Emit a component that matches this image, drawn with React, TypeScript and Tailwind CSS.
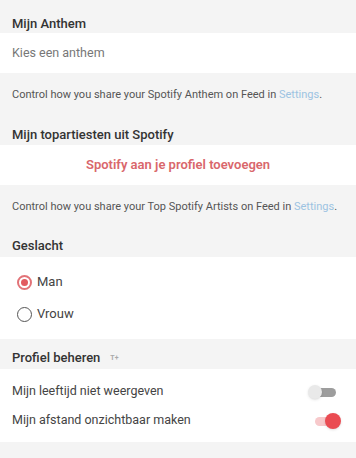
import { useState } from 'react'

function SectionTitle({ children, h = 'h-[32px]', pb = 'pb-[4px]' }: { children: React.ReactNode; h?: string; pb?: string }) {
  return (
    <div className={`flex ${h} items-end gap-[10px] px-3 ${pb} text-[13px] leading-[15px] font-medium text-[#333]`}>
      {children}
    </div>
  )
}

function Note({ children }: { children: React.ReactNode }) {
  return <div className="h-[40px] px-3 pt-[14px] text-[11px] leading-[15px] text-[#555]">{children}</div>
}

function Radio({ checked, label, onClick }: { checked: boolean; label: string; onClick: () => void }) {
  return (
    <button type="button" onClick={onClick} className="flex h-[32px] items-center gap-[5px] px-[17px] text-[13px] text-[#444]">
      <span
        className={
          checked
            ? 'flex h-[15px] w-[15px] items-center justify-center rounded-full border-2 border-[#e27378]'
            : 'flex h-[15px] w-[15px] items-center justify-center rounded-full border-[1.5px] border-[#555]'
        }
      >
        {checked && <span className="h-[7px] w-[7px] rounded-full bg-[#e25a60]" />}
      </span>
      {label}
    </button>
  )
}

function Toggle({ on, onClick }: { on: boolean; onClick: () => void }) {
  return (
    <button type="button" onClick={onClick} className="relative h-[16px] w-[33px]">
      <span
        className={
          on
            ? 'absolute left-[7px] right-[5px] top-[4px] h-[9px] rounded-full bg-[#f7c9cb]'
            : 'absolute left-[7px] right-[5px] top-[4px] h-[9px] rounded-full bg-[#9d9d9d]'
        }
      />
      {on ? (
        <span className="absolute right-0 top-0 h-[16px] w-[16px] rounded-full bg-[#ea4b52] shadow-sm" />
      ) : (
        <span className="absolute left-0 top-[1px] h-[14px] w-[14px] rounded-full bg-[#e9e9e9] shadow-sm" />
      )}
    </button>
  )
}

export default function App() {
  const [gender, setGender] = useState<'man' | 'vrouw'>('man')
  const [hideAge, setHideAge] = useState(false)
  const [hideDistance, setHideDistance] = useState(true)

  return (
    <div className="h-[458px] w-[356px] overflow-hidden bg-[#f4f4f4] font-['Roboto',sans-serif]">
      <SectionTitle h="h-[33px]" pb="pb-[2px]">Mijn Anthem</SectionTitle>
      <div className="flex h-[40px] items-center bg-white px-3 text-[12.5px] text-[#777]">Kies een anthem</div>
      <Note>
        Control how you share your Spotify Anthem on Feed in <span className="text-[#9cc3e2]">Settings</span>.
      </Note>

      <SectionTitle pb="pb-[3px]">Mijn topartiesten uit Spotify</SectionTitle>
      <div className="flex h-[40px] items-center justify-center bg-white text-[13px] font-semibold text-[#d9676c]">
        Spotify aan je profiel toevoegen
      </div>
      <Note>
        Control how you share your Top Spotify Artists on Feed in <span className="text-[#9cc3e2]">Settings</span>.
      </Note>

      <SectionTitle>Geslacht</SectionTitle>
      <div className="flex flex-col bg-white py-[9px]">
        <Radio checked={gender === 'man'} label="Man" onClick={() => setGender('man')} />
        <Radio checked={gender === 'vrouw'} label="Vrouw" onClick={() => setGender('vrouw')} />
      </div>

      <SectionTitle h="h-[30px]">
        Profiel beheren
        <span className="pb-[3px] text-[7px] leading-[8px] font-bold text-[#aaa]">T+</span>
      </SectionTitle>
      <div className="flex flex-col bg-white pt-[8px] pb-[7px]">
        <div className="flex h-[29px] items-center justify-between pl-3 pr-[15px] text-[12.5px] text-[#444]">
          Mijn leeftijd niet weergeven
          <Toggle on={hideAge} onClick={() => setHideAge(!hideAge)} />
        </div>
        <div className="flex h-[29px] items-center justify-between pl-3 pr-[15px] text-[12.5px] text-[#444]">
          Mijn afstand onzichtbaar maken
          <Toggle on={hideDistance} onClick={() => setHideDistance(!hideDistance)} />
        </div>
      </div>
    </div>
  )
}
